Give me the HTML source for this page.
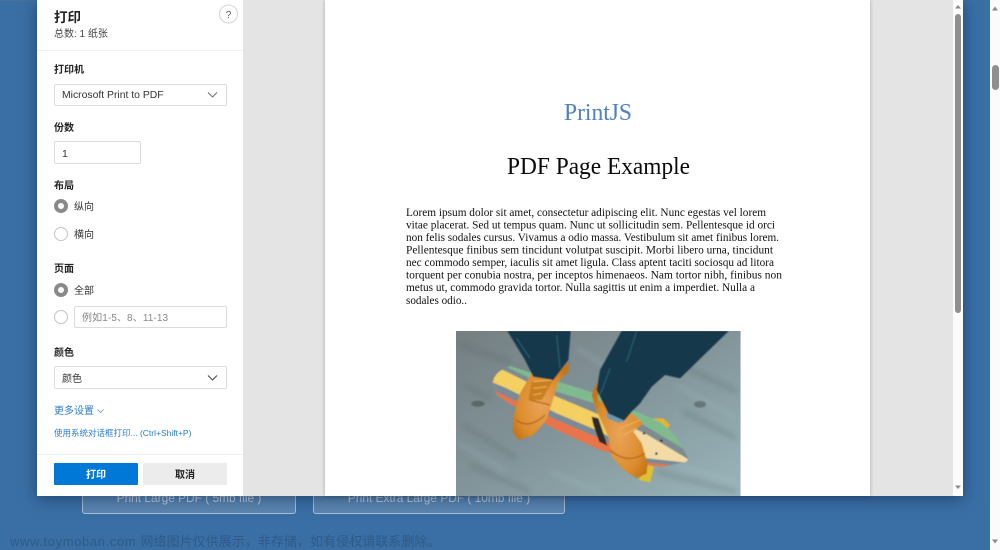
<!DOCTYPE html>
<html lang="zh-CN">
<head>
<meta charset="utf-8">
<title>PrintJS</title>
<style>
html,body{margin:0;padding:0;width:1000px;height:550px;overflow:hidden;background:#3a6fa5;}
body{position:relative;font-family:"Liberation Sans","Noto Sans CJK SC",sans-serif;}
.a{position:absolute;white-space:nowrap;}
.lbl{font-size:10px;font-weight:700;color:#222;line-height:14px;left:54px;}
.txt{font-size:10px;color:#333;line-height:14px;}
.box{position:absolute;box-sizing:border-box;background:#fff;border:1px solid #dcdcdc;border-radius:2px;}
.radio{position:absolute;box-sizing:border-box;width:14px;height:14px;border-radius:50%;background:#fff;border:1px solid #c4c4c4;left:54px;}
.radio.on{border:4px solid #8a8a8a;}
#all{filter:blur(.25px);position:absolute;left:0;top:0;width:1000px;height:550px;}
</style>
</head>
<body>
<div id="all">
<!-- outer scrollbar -->
<div class="a" style="left:990px;top:0;width:10px;height:550px;background:#fbfbfb;"></div>
<div class="a" style="left:991.5px;top:65px;width:7px;height:25px;background:#8f8f8f;border-radius:3.5px;"></div>
<svg class="a" style="left:990px;top:5px" width="10" height="6"><path d="M2 5.5L5 1.5L8 5.5Z" fill="#8a8a8a"/></svg>
<svg class="a" style="left:990px;top:539px" width="10" height="6"><path d="M2 .5L8 .5L5 4.5Z" fill="#8a8a8a"/></svg>
<div class="a" style="left:0;top:0;width:37px;height:1px;background:#4b6f95;"></div>

<!-- background buttons -->
<div class="a" style="left:82px;top:470px;width:214px;height:44px;box-sizing:border-box;border:1px solid #a9c0d8;border-radius:3px;background:#5a85b0;color:#c5d4e4;font-size:11.9px;text-align:center;line-height:54px;">Print Large PDF ( 5mb file )</div>
<div class="a" style="left:313px;top:470px;width:252px;height:44px;box-sizing:border-box;border:1px solid #a9c0d8;border-radius:3px;background:#5a85b0;color:#c5d4e4;font-size:11.9px;text-align:center;line-height:54px;">Print Extra Large PDF ( 10mb file )</div>

<!-- watermark -->
<div class="a" style="left:10px;top:533px;font-size:13px;line-height:18px;color:#2f5a88;letter-spacing:.62px;">www.toymoban.com <span style="letter-spacing:.05px">网络图片仅供展示，非存储，如有侵权请联系删除。</span></div>

<!-- dialog -->
<div class="a" style="left:37px;top:0;width:926px;height:496px;box-shadow:0 3px 14px rgba(10,30,60,.5);"></div>
<div class="a" style="left:37px;top:0;width:206px;height:496px;background:#fff;"></div>
<div class="a" style="left:243px;top:0;width:710px;height:496px;background:#e4e4e4;"></div>
<div class="a" style="left:953px;top:0;width:10px;height:496px;background:#fbfbfb;"></div>
<div class="a" style="left:955px;top:14px;width:6px;height:299px;background:#8f8f8f;border-radius:3px;"></div>
<svg class="a" style="left:953px;top:4px" width="10" height="5"><path d="M2 4.5L5 1L8 4.5Z" fill="#8a8a8a"/></svg>
<svg class="a" style="left:953px;top:485px" width="10" height="5"><path d="M2 .5L8 .5L5 4Z" fill="#8a8a8a"/></svg>

<!-- left panel -->
<div class="a" style="left:54px;top:9px;font-size:13.5px;font-weight:700;line-height:18px;color:#222;">打印</div>
<div class="a txt" style="left:54px;top:28px;color:#444;">总数: 1 纸张</div>
<svg class="a" style="left:219px;top:4px" width="20" height="20"><circle cx="9.5" cy="10" r="9" fill="#fff" stroke="#d4d4d4"/><text x="9.5" y="14" font-size="10" text-anchor="middle" fill="#555" font-family="Liberation Sans">?</text></svg>
<div class="a" style="left:37px;top:50px;width:206px;height:1px;background:#f0f0f0;"></div>

<div class="a lbl" style="top:64px;">打印机</div>
<div class="box" style="left:54px;top:84px;width:173px;height:22px;"></div>
<div class="a" style="left:62px;top:89px;font-size:10.4px;line-height:14px;color:#333;">Microsoft Print to PDF</div>
<svg class="a" style="left:207px;top:91px" width="11" height="8"><path d="M1 1.5L5.5 6L10 1.5" fill="none" stroke="#666" stroke-width=".9"/></svg>

<div class="a lbl" style="top:122px;">份数</div>
<div class="box" style="left:54px;top:141px;width:87px;height:23px;"></div>
<div class="a" style="left:62px;top:147px;font-size:10.5px;line-height:14px;color:#333;">1</div>

<div class="a lbl" style="top:180px;">布局</div>
<div class="radio on" style="top:199px;"></div>
<div class="a txt" style="left:74px;top:201px;">纵向</div>
<div class="radio" style="top:227px;"></div>
<div class="a txt" style="left:74px;top:229px;">横向</div>

<div class="a lbl" style="top:263px;">页面</div>
<div class="radio on" style="top:283px;"></div>
<div class="a txt" style="left:74px;top:285px;">全部</div>
<div class="radio" style="top:310px;"></div>
<div class="box" style="left:74px;top:306px;width:153px;height:22px;"></div>
<div class="a" style="left:82px;top:312px;font-size:10px;line-height:14px;color:#888;letter-spacing:.1px;">例如1-5、8、11-13</div>

<div class="a lbl" style="top:347px;">颜色</div>
<div class="box" style="left:54px;top:366px;width:173px;height:23px;"></div>
<div class="a txt" style="left:62px;top:373px;">颜色</div>
<svg class="a" style="left:207px;top:374px" width="11" height="8"><path d="M1 1.5L5.5 6L10 1.5" fill="none" stroke="#444" stroke-width="1"/></svg>

<div class="a" style="left:54px;top:405px;font-size:10px;line-height:14px;color:#2a7cd0;">更多设置</div>
<svg class="a" style="left:97px;top:408px" width="7" height="6"><path d="M.5 1.5L3.5 4.5L6.5 1.5" fill="none" stroke="#5a9ad8" stroke-width=".8"/></svg>
<div class="a" style="left:54px;top:426px;font-size:8.5px;line-height:14px;color:#2a7cd0;">使用系统对话框打印... (Ctrl+Shift+P)</div>

<div class="a" style="left:37px;top:454px;width:206px;height:1px;background:#f0f0f0;"></div>
<div class="a" style="left:54px;top:463px;width:84px;height:22px;background:#0078d7;border-radius:1px;color:#fff;font-size:10px;font-weight:700;line-height:25px;text-align:center;">打印</div>
<div class="a" style="left:143px;top:463px;width:84px;height:22px;background:#ececec;border-radius:1px;color:#222;font-size:10px;font-weight:700;line-height:25px;text-align:center;">取消</div>

<!-- page -->
<div class="a" style="left:325px;top:0;width:545px;height:496px;background:#fff;box-shadow:0 0 4px rgba(0,0,0,.25);"></div>
<svg class="a" style="left:325px;top:0" width="545" height="330" font-family="Liberation Serif, serif">
  <text x="239" y="120" font-size="24" fill="#4f81bd" textLength="68" lengthAdjust="spacingAndGlyphs">PrintJS</text>
  <text x="182" y="174" font-size="24.5" fill="#0a0a0a" textLength="183" lengthAdjust="spacingAndGlyphs">PDF Page Example</text>
  <g font-size="12" fill="#111">
    <text x="81" y="216" textLength="360" lengthAdjust="spacingAndGlyphs">Lorem ipsum dolor sit amet, consectetur adipiscing elit. Nunc egestas vel lorem</text>
    <text x="81" y="228.5" textLength="369" lengthAdjust="spacingAndGlyphs">vitae placerat. Sed ut tempus quam. Nunc ut sollicitudin sem. Pellentesque id orci</text>
    <text x="81" y="241" textLength="373" lengthAdjust="spacingAndGlyphs">non felis sodales cursus. Vivamus a odio massa. Vestibulum sit amet finibus lorem.</text>
    <text x="81" y="253.5" textLength="367" lengthAdjust="spacingAndGlyphs">Pellentesque finibus sem tincidunt volutpat suscipit. Morbi libero urna, tincidunt</text>
    <text x="81" y="266" textLength="368" lengthAdjust="spacingAndGlyphs">nec commodo semper, iaculis sit amet ligula. Class aptent taciti sociosqu ad litora</text>
    <text x="81" y="278.5" textLength="376" lengthAdjust="spacingAndGlyphs">torquent per conubia nostra, per inceptos himenaeos. Nam tortor nibh, finibus non</text>
    <text x="81" y="291" textLength="349" lengthAdjust="spacingAndGlyphs">metus ut, commodo gravida tortor. Nulla sagittis ut enim a imperdiet. Nulla a</text>
    <text x="81" y="304" textLength="61" lengthAdjust="spacingAndGlyphs">sodales odio..</text>
  </g>
</svg>

<!-- photo -->
<svg class="a" style="left:450px;top:325px" width="300" height="171" viewBox="0 0 900 513">
  <defs>
    <linearGradient id="g" x1="0" y1="0" x2="1" y2="1">
      <stop offset="0" stop-color="#757f82"/><stop offset=".5" stop-color="#82959a"/><stop offset="1" stop-color="#9ab5ba"/>
    </linearGradient>
    <radialGradient id="sh" cx=".5" cy=".55" r=".6">
      <stop offset="0" stop-color="#eaa458"/><stop offset=".7" stop-color="#dc8c2c"/><stop offset="1" stop-color="#c47418"/>
    </radialGradient>
    <clipPath id="c"><rect x="18" y="18" width="854" height="495"/></clipPath>
    <clipPath id="b"><path d="M155 135L180 123L325 170L450 210L560 260L630 290L680 335L715 400L710 410L640 425L590 420L450 375L320 315L170 230L140 210L128 175Q130 150 155 135Z"/></clipPath>
    <filter id="bl"><feGaussianBlur stdDeviation="1.5"/></filter>
    <filter id="bl2"><feGaussianBlur stdDeviation="9"/></filter>
  </defs>
  <g clip-path="url(#c)">
    <rect x="18" y="18" width="854" height="495" fill="url(#g)"/>
    <g filter="url(#bl2)" stroke-width="12" opacity=".28">
      <path d="M30 60L180 110M40 300L200 400M60 420L240 500M650 100L860 200M700 260L860 340M620 440L860 500M40 180L120 220" stroke="#515b5e"/>
      <path d="M20 350L170 440M300 440L460 505M680 180L860 280M680 420L860 470M380 70L480 130" stroke="#a7c2c8"/>
    </g>
    <g filter="url(#bl)">
      <ellipse cx="84" cy="236" rx="20" ry="9" fill="#4a5453" opacity=".65"/>
      <ellipse cx="750" cy="238" rx="18" ry="10" fill="#55625f" opacity=".65"/>
      <path d="M605 280L640 280L660 300L648 318L610 300Z" fill="#e8b52c"/>
      <path d="M595 420L612 425L600 472L565 465Z" fill="#e0c030"/>
      <g clip-path="url(#b)">
        <rect x="110" y="110" width="620" height="330" fill="#7fbb8e"/>
        <path d="M110 105L170 125L320 200L450 240L580 300L690 365L730 390V440H110Z" fill="#7e8b92"/>
        <path d="M110 115L170 140L320 215L450 270L585 325L730 412V440H110Z" fill="#f4cf62"/>
        <path d="M540 305L585 325L730 412V440H540Z" fill="#f2dba4"/>
        <path d="M110 165L170 190L320 265L450 320L590 400L700 412V440H110Z" fill="#7a8a96"/>
        <path d="M110 185L170 215L320 285L450 340L590 412L700 425V440H110Z" fill="#e8744a"/>
      </g>
      <path d="M425 275L445 280L472 362L448 350L430 298Z" fill="#2a2a26"/>
      <circle cx="582" cy="325" r="3.5" fill="#222"/><circle cx="634" cy="347" r="3.5" fill="#222"/><circle cx="619" cy="386" r="3.5" fill="#222"/>
      <path d="M358 110L355 140L325 170L305 235L290 285L250 330L205 345L188 320L190 275L210 205L245 145L250 150L315 150Z" fill="url(#sh)"/>
      <path d="M240 225L300 240M198 285Q235 315 285 270" fill="none" stroke="#a85e12" stroke-width="3"/>
      <path d="M440 170L425 210L435 245L475 335L485 395L520 435L560 460L590 445L592 415L575 355L550 320L580 295L545 265L500 260L445 225Z" fill="url(#sh)"/>
      <path d="M480 375Q530 420 585 385" fill="none" stroke="#a85e12" stroke-width="3"/>
      <path d="M245 170L310 165L275 225L235 225Z" fill="#c9801f"/>
      <path d="M250 170L305 165M250 190L290 185M250 210L275 205M510 310L570 285M520 330L560 310" stroke="#ecb468" stroke-width="3" fill="none"/>
      <path d="M172 18L362 18L355 105L310 165L250 155L225 105Z" fill="#17394c"/>
      <path d="M515 18L836 18L690 160L645 150L605 185L570 235L545 260L520 290L480 275L440 195L450 135Z" fill="#15394c"/>
      <path d="M560 18L530 110M480 130L450 210M200 40L240 100M320 30L330 130" stroke="#2a5a6e" stroke-width="4" fill="none"/>
      <path d="M468 262L525 288L505 294L472 280Z" fill="#6f98ac"/>
    </g>
  </g>
</svg>
</div>
</body>
</html>
